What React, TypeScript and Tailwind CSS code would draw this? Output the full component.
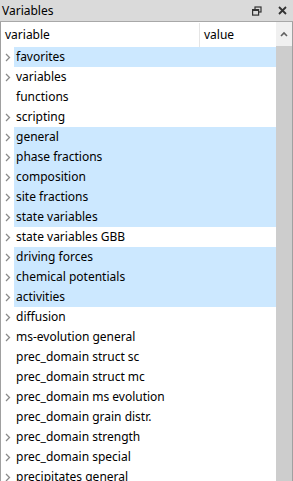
import React from "react";

const rows: { label: string; chev: boolean; hl: boolean }[] = [
  { label: "favorites", chev: true, hl: true },
  { label: "variables", chev: true, hl: false },
  { label: "functions", chev: false, hl: false },
  { label: "scripting", chev: true, hl: false },
  { label: "general", chev: true, hl: true },
  { label: "phase fractions", chev: true, hl: true },
  { label: "composition", chev: true, hl: true },
  { label: "site fractions", chev: true, hl: true },
  { label: "state variables", chev: true, hl: true },
  { label: "state variables GBB", chev: true, hl: false },
  { label: "driving forces", chev: true, hl: true },
  { label: "chemical potentials", chev: true, hl: true },
  { label: "activities", chev: true, hl: true },
  { label: "diffusion", chev: true, hl: false },
  { label: "ms-evolution general", chev: true, hl: false },
  { label: "prec_domain struct sc", chev: false, hl: false },
  { label: "prec_domain struct mc", chev: false, hl: false },
  { label: "prec_domain ms evolution", chev: true, hl: false },
  { label: "prec_domain grain distr.", chev: false, hl: false },
  { label: "prec_domain strength", chev: true, hl: false },
  { label: "prec_domain special", chev: true, hl: false },
  { label: "precipitates general", chev: true, hl: false },
];

function Chevron() {
  return (
    <svg width="6" height="9" viewBox="0 0 6 9">
      <path d="M1 1 L4.5 4.5 L1 8" fill="none" stroke="#8a8a8a" strokeWidth="1.3" />
    </svg>
  );
}

export default function App() {
  return (
    <div
      className="w-[293px] h-[481px] overflow-hidden bg-white text-[12px] text-black flex flex-col"
      style={{ fontFamily: '"Noto Sans", "Open Sans", sans-serif' }}
    >
      <div className="h-[22px] shrink-0 bg-[#dadada] border-b border-[#a8a8a8] flex items-center justify-between pl-[2px] pr-[6px]">
        <span className="leading-none">Variables</span>
        <div className="flex items-center gap-[16px]">
          <svg width="10" height="10" viewBox="0 0 10 10">
            <rect x="3" y="1" width="6" height="5" fill="none" stroke="#333" strokeWidth="1.2" />
            <rect x="0.6" y="3.6" width="6" height="5.5" fill="#dadada" stroke="#333" strokeWidth="1.2" />
            <line x1="0.6" y1="4.2" x2="6.6" y2="4.2" stroke="#333" strokeWidth="1.6" />
          </svg>
          <svg width="9" height="9" viewBox="0 0 9 9">
            <path d="M1 1 L8 8 M8 1 L1 8" stroke="#333" strokeWidth="1.8" />
          </svg>
        </div>
      </div>
      <div className="flex-1 flex border-l border-r border-[#a0a0a0] min-h-0">
        <div className="flex-1 flex flex-col min-w-0">
          <div className="h-[25px] shrink-0 flex pt-[1px]">
            <div className="w-[199px] flex items-center pl-[4px] border-r border-[#e5e5e5]">variable</div>
            <div className="flex-1 flex items-center pl-[4px]">value</div>
          </div>
          {rows.map((r) => (
            <div key={r.label} className="h-[20px] shrink-0 flex">
              <div className="w-[13px] flex items-center justify-center">{r.chev ? <Chevron /> : null}</div>
              <div className={`flex-1 flex items-center pl-[2px] whitespace-nowrap ${r.hl ? "bg-[#cce8ff]" : ""}`}>
                {r.label}
              </div>
            </div>
          ))}
        </div>
        <div className="w-[16px] shrink-0 flex flex-col">
          <div className="h-[24px] bg-[#f0f0f0] flex items-center justify-center">
            <svg width="8" height="6" viewBox="0 0 8 6">
              <path d="M1 5 L4 2 L7 5" fill="none" stroke="#606060" strokeWidth="1.6" />
            </svg>
          </div>
          <div className="flex-1 bg-[#cdcdcd]" />
        </div>
      </div>
    </div>
  );
}
